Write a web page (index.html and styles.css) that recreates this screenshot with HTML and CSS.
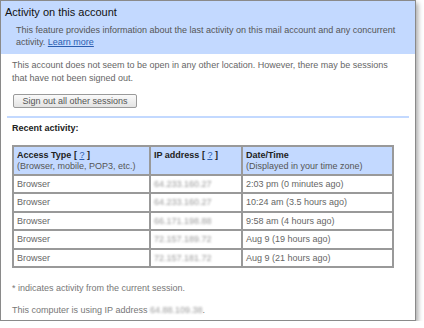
FILE: index.html
```html
<!DOCTYPE html>
<html lang="en">

<head>
  <meta charset="UTF-8">
  <meta name="viewport" content="width=device-width, initial-scale=1.0">
  <link rel="stylesheet" href="styles.css">
  <title>Activity on this account</title>
</head>

<body>
  <div class="window">
    <div class="header">
      <div class="title">Activity on this account</div>
      <div class="intro">
        This feature provides information about the last activity on this mail account and any concurrent
        activity. <a href="#">Learn more</a>
      </div>
    </div>

    <p class="note">This account does not seem to be open in any other location. However, there may be sessions
      that have not been signed out.</p>

    <button class="signOut">Sign out all other sessions</button>

    <div class="separator"></div>

    <div class="recent">Recent activity:</div>

    <table class="activity">
      <tr>
        <th class="colType">Access Type <span class="help">[ <a href="#">?</a> ]</span>
          <br><span class="sub">(Browser, mobile, POP3, etc.)</span></th>
        <th class="colIp">IP address <span class="help">[ <a href="#">?</a> ]</span></th>
        <th>Date/Time
          <br><span class="sub">(Displayed in your time zone)</span></th>
      </tr>
      <tr>
        <td>Browser</td>
        <td><span class="ip">64.233.160.27</span></td>
        <td>2:03 pm (0 minutes ago)</td>
      </tr>
      <tr>
        <td>Browser</td>
        <td><span class="ip">64.233.160.27</span></td>
        <td>10:24 am (3.5 hours ago)</td>
      </tr>
      <tr>
        <td>Browser</td>
        <td><span class="ip">66.171.198.88</span></td>
        <td>9:58 am (4 hours ago)</td>
      </tr>
      <tr>
        <td>Browser</td>
        <td><span class="ip">72.157.189.72</span></td>
        <td>Aug 9 (19 hours ago)</td>
      </tr>
      <tr>
        <td>Browser</td>
        <td><span class="ip">72.157.181.72</span></td>
        <td>Aug 9 (21 hours ago)</td>
      </tr>
    </table>

    <p class="footnote">* indicates activity from the current session.</p>
    <p class="footnote lastNote">This computer is using IP address <span class="ip">64.88.109.38</span>.</p>
  </div>
</body>

</html>
```

FILE: styles.css
```css
body {
  margin: 0;
  background-color: #fff;
  font-family: "Liberation Sans", Arial, sans-serif;
  font-size: 9px;
  color: #666;
}

.window {
  width: 414px;
  height: 319px;
  border: 1px solid #8a8a8a;
  box-shadow: 2px 3px 5px rgba(0, 0, 0, 0.35);
  background-color: #fff;
  overflow: hidden;
}

.header {
  background-color: #c3d9ff;
  height: 53px;
  box-sizing: border-box;
  padding: 5px 0 0 4px;
}

.title {
  font-size: 11px;
  line-height: 13px;
  color: #111;
}

.intro {
  margin: 5px 12px 0 11px;
  line-height: 12px;
  color: #555;
}

a {
  color: #2a5db0;
}

.note {
  margin: 5px 12px 0 11px;
  line-height: 13px;
}

.signOut {
  display: block;
  margin: 9px 0 0 12px;
  width: 124px;
  height: 14px;
  padding: 0;
  font-family: inherit;
  font-size: 9px;
  line-height: 12px;
  color: #555;
  border: 1px solid #9a9a9a;
  border-radius: 2px;
  background: linear-gradient(#fafafa, #e3e3e3);
}

.separator {
  height: 2px;
  margin: 8px 6px 0 6px;
  background-color: #c3d9ff;
}

.recent {
  margin: 4px 0 0 11px;
  line-height: 12px;
  font-weight: bold;
  color: #222;
}

.activity {
  margin: 11px 0 0 11px;
  width: 382px;
  border: 1px solid #999;
  border-spacing: 0;
  table-layout: fixed;
}

.activity th,
.activity td {
  box-sizing: border-box;
  border: 1px solid #999;
  text-align: left;
  vertical-align: top;
  line-height: 12.4px;
  padding: 2px 3px;
  white-space: nowrap;
}

.activity th {
  background-color: #c3d9ff;
  color: #222;
  line-height: 11px;
  padding: 3px 3px 2px 3px;
}

.colType {
  width: 137px;
}

.colIp {
  width: 92px;
}

.help a {
  font-weight: normal;
}

.sub {
  font-weight: normal;
  color: #555;
}

.ip {
  color: #999;
  filter: blur(0.8px);
}

.footnote {
  margin: 14px 0 0 11px;
  line-height: 12px;
  color: #777;
}

.lastNote {
  margin-top: 10px;
}
```
